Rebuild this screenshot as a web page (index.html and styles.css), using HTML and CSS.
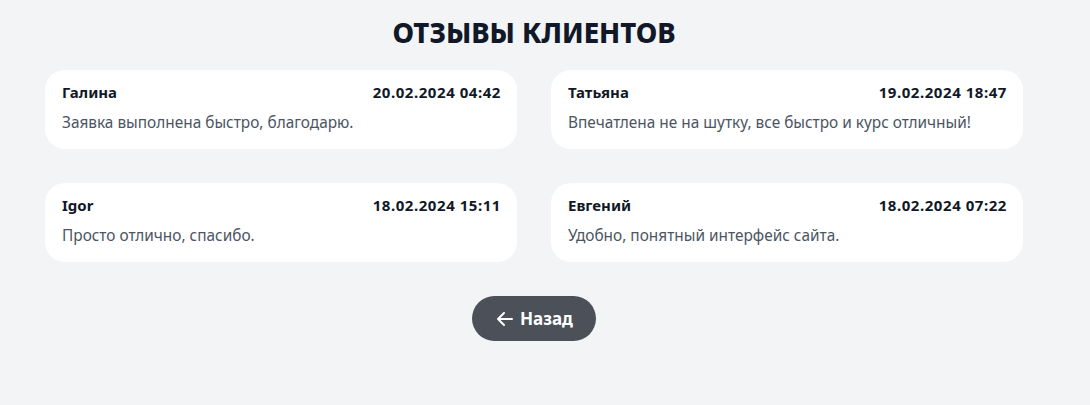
FILE: index.html
```html
<!DOCTYPE html>
<html lang="ru">
<head>
<meta charset="utf-8">
<title>Отзывы клиентов</title>
<link rel="stylesheet" href="styles.css">
</head>
<body>
<main class="page">
  <h1 class="title">ОТЗЫВЫ КЛИЕНТОВ</h1>
  <div class="grid">
    <div class="card">
      <div class="card-head"><span class="name">Галина</span><span class="date">20.02.2024 04:42</span></div>
      <p class="text">Заявка выполнена быстро, благодарю.</p>
    </div>
    <div class="card">
      <div class="card-head"><span class="name">Татьяна</span><span class="date">19.02.2024 18:47</span></div>
      <p class="text">Впечатлена не на шутку, все быстро и курс отличный!</p>
    </div>
    <div class="card">
      <div class="card-head"><span class="name">Igor</span><span class="date">18.02.2024 15:11</span></div>
      <p class="text">Просто отлично, спасибо.</p>
    </div>
    <div class="card">
      <div class="card-head"><span class="name">Евгений</span><span class="date">18.02.2024 07:22</span></div>
      <p class="text">Удобно, понятный интерфейс сайта.</p>
    </div>
  </div>
  <div class="actions">
    <a class="back" href="#">
      <svg class="arrow" width="20" height="20" viewBox="0 0 20 20" fill="none" stroke="currentColor" stroke-width="2" stroke-linecap="round" stroke-linejoin="round"><path d="M17 10H3M9 4L3 10l6 6"/></svg>
      <span>Назад</span>
    </a>
  </div>
</main>
</body>
</html>
```
FILE: styles.css
```css
* { box-sizing: border-box; }
html, body { margin: 0; padding: 0; }
body {
  background: #f3f4f6;
  font-family: "Noto Sans", "Open Sans", sans-serif;
  color: #1f2937;
  width: 1090px;
  height: 405px;
  overflow: hidden;
}
.page {
  width: 978px;
  margin-left: 45px;
  padding-top: 15px;
}
.title {
  margin: 0;
  text-align: center;
  font-size: 27.5px;
  line-height: 36px;
  font-weight: 800;
  color: #111827;
}
.grid {
  margin-top: 19px;
  display: grid;
  grid-template-columns: 1fr 1fr;
  column-gap: 34px;
  row-gap: 34px;
}
.card {
  background: #fff;
  border-radius: 20px;
  padding: 11px 17px 14px;
  height: 79px;
}
.card-head {
  display: flex;
  justify-content: space-between;
  align-items: center;
  font-size: 15px;
  font-weight: 700;
  line-height: 22px;
  color: #111827;
}
.date { letter-spacing: 0.55px; margin-right: -1px; }
.text {
  margin: 9px 0 0;
  font-size: 15.4px;
  line-height: 22px;
  color: #4b5563;
}
.actions {
  display: flex;
  justify-content: center;
  margin-top: 34px;
}
.back {
  display: flex;
  align-items: center;
  gap: 5px;
  height: 45px;
  width: 124px;
  justify-content: center;
  border-radius: 23px;
  background: #4b5059;
  color: #fff;
  text-decoration: none;
  font-size: 17px;
  font-weight: 700;
}
.arrow { display: block; }
```
